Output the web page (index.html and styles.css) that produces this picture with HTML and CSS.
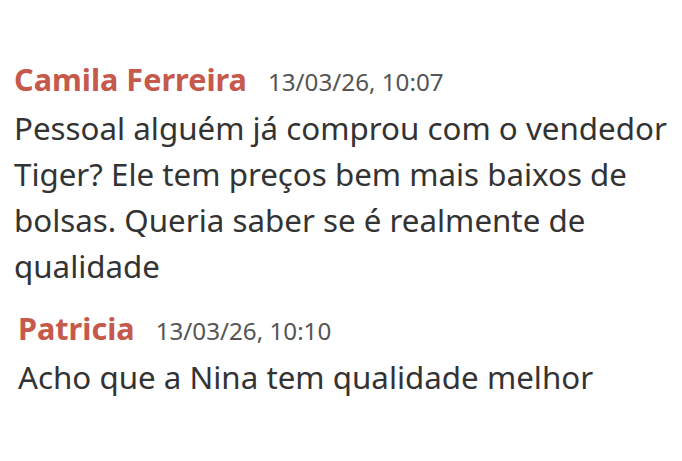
FILE: index.html
```html
<!DOCTYPE html>
<html lang="pt">
<head>
<meta charset="utf-8">
<link rel="stylesheet" href="styles.css">
</head>
<body>
<div class="chat">
  <div class="msg msg-first">
    <div class="head"><span class="name">Camila Ferreira</span><span class="time">13/03/26, 10:07</span></div>
    <div class="text">Pessoal alguém já comprou com o vendedor Tiger? Ele tem preços bem mais baixos de bolsas. Queria saber se é realmente de qualidade</div>
  </div>
  <div class="msg msg-second">
    <div class="head"><span class="name">Patricia</span><span class="time">13/03/26, 10:10</span></div>
    <div class="text">Acho que a Nina tem qualidade melhor</div>
  </div>
</div>
</body>
</html>
```
FILE: styles.css
```css
html, body {
  margin: 0;
  padding: 0;
  background: #ffffff;
}
body {
  font-family: "Noto Sans", Roboto, sans-serif;
  color: #333333;
}
.chat {
  padding-top: 56px;
  display: flex;
  flex-direction: column;
}
.msg-first {
  padding-left: 14px;
  width: 662px;
}
.msg-second {
  padding-left: 18px;
  margin-top: 16px;
}
.head {
  display: flex;
  align-items: baseline;
  gap: 21px;
  line-height: 46px;
}
.name {
  color: #c5594b;
  font-weight: 700;
  font-size: 30.6px;
}
.time {
  color: #555555;
  font-size: 24.2px;
}
.text {
  font-size: 31.3px;
  line-height: 46px;
}
```
